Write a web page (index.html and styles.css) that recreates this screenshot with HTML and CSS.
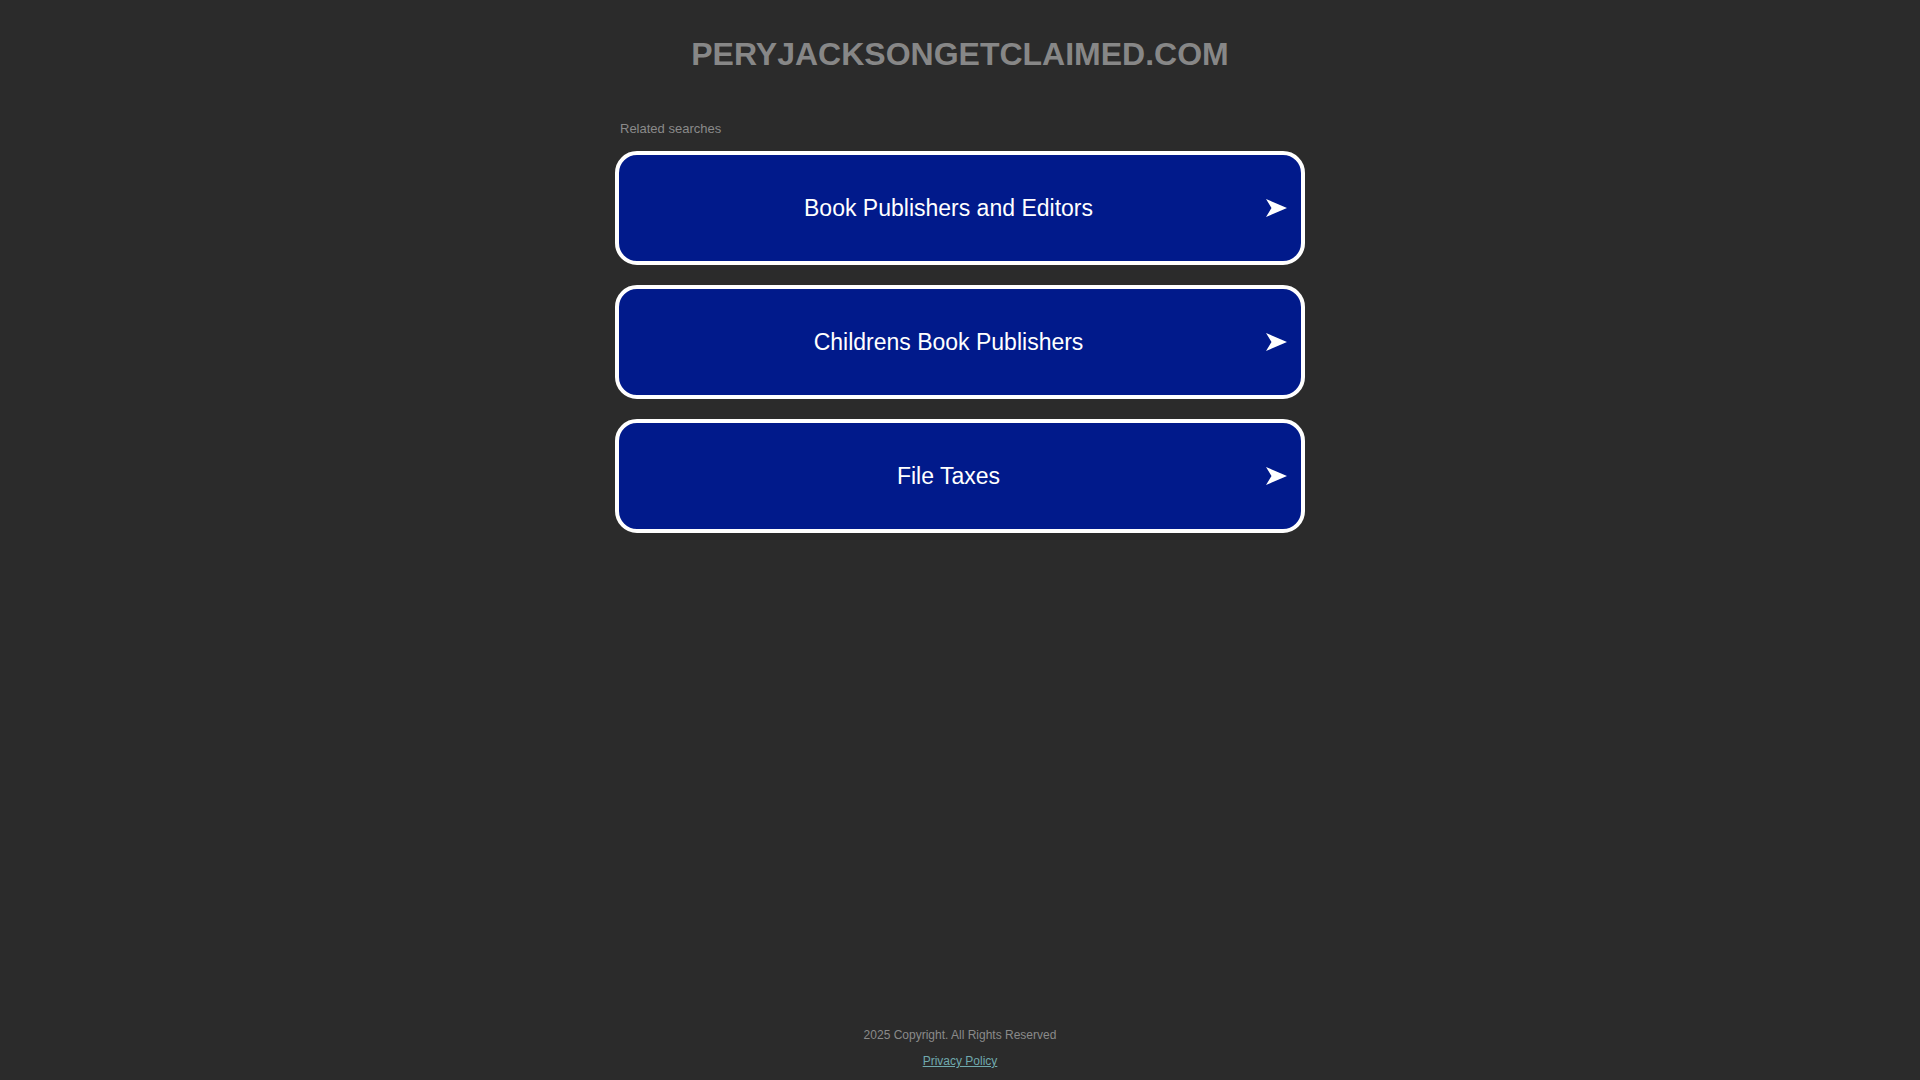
FILE: index.html
```html
<!DOCTYPE html>
<html lang="en">
<head>
<meta charset="utf-8">
<title>peryjacksongetclaimed.com</title>
<link rel="stylesheet" href="styles.css">
</head>
<body>
<main class="page">
  <header class="header">
    <h1 class="domain">PERYJACKSONGETCLAIMED.COM</h1>
  </header>
  <section class="related">
    <p class="related-title">Related searches</p>
    <ul class="links">
      <li><a class="link-box" href="#"><span class="link-text">Book Publishers and Editors</span><svg class="arrow" width="21" height="18" viewBox="0 0 21 18"><path d="M0 0 L21 9 L0 18 L5.5 9 Z" fill="#fff"/></svg></a></li>
      <li><a class="link-box" href="#"><span class="link-text">Childrens Book Publishers</span><svg class="arrow" width="21" height="18" viewBox="0 0 21 18"><path d="M0 0 L21 9 L0 18 L5.5 9 Z" fill="#fff"/></svg></a></li>
      <li><a class="link-box" href="#"><span class="link-text">File Taxes</span><svg class="arrow" width="21" height="18" viewBox="0 0 21 18"><path d="M0 0 L21 9 L0 18 L5.5 9 Z" fill="#fff"/></svg></a></li>
    </ul>
  </section>
  <footer class="footer">
    <p class="copyright">2025 Copyright. All Rights Reserved</p>
    <a class="privacy" href="#">Privacy Policy</a>
  </footer>
</main>
</body>
</html>
```

FILE: styles.css
```css
html, body {
  margin: 0;
  padding: 0;
  background: #2b2b2b;
}

body {
  font-family: "Liberation Sans", Arial, sans-serif;
}

.page {
  min-height: 100vh;
  display: flex;
  flex-direction: column;
  align-items: center;
  box-sizing: border-box;
}

.header {
  padding-top: 35px;
  text-align: center;
}

.domain {
  margin: 0;
  font-size: 32px;
  line-height: 38px;
  font-weight: bold;
  color: #878787;
}

.related {
  width: 690px;
  margin-top: 48px;
}

.related-title {
  margin: 0 0 14px 5px;
  font-size: 13px;
  line-height: 16px;
  color: #8a8a8a;
}

.links {
  list-style: none;
  margin: 0;
  padding: 0;
  display: flex;
  flex-direction: column;
  gap: 20px;
}

.link-box {
  display: flex;
  align-items: center;
  box-sizing: border-box;
  height: 114px;
  border: 4px solid #ffffff;
  border-radius: 22px;
  background: #011a8b;
  padding: 0 14px 0 12px;
  text-decoration: none;
  color: #ffffff;
}

.link-text {
  flex: 1;
  text-align: center;
  font-size: 23px;
  line-height: 28px;
}

.arrow {
  display: block;
  flex: none;
}

.footer {
  margin-top: auto;
  padding-bottom: 12px;
  text-align: center;
  display: flex;
  flex-direction: column;
  align-items: center;
  gap: 12px;
}

.copyright {
  margin: 0;
  font-size: 12px;
  line-height: 14px;
  color: #8a8a8a;
}

.privacy {
  font-size: 12px;
  line-height: 14px;
  color: #70a9ae;
}
```
